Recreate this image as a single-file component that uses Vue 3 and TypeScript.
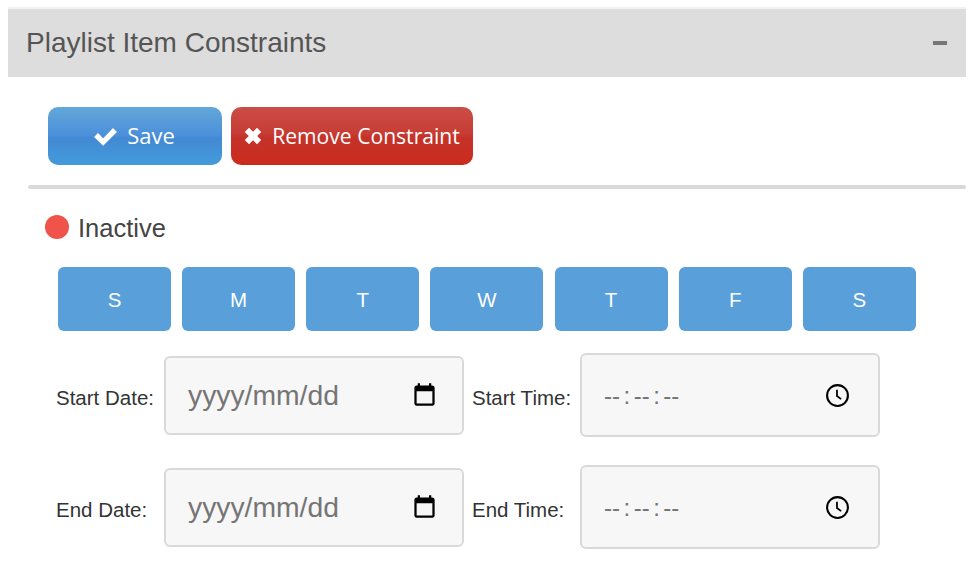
<template>
  <div class="page">
    <section class="panel">
      <header class="panel-head">
        <h2>Playlist Item Constraints</h2>
        <span class="collapse"></span>
      </header>

      <div class="panel-body">
        <div class="actions">
          <button class="btn btn-save">
            <svg class="btn-icon" viewBox="0 0 24 24" width="25" height="25">
              <path d="M1 12.500 4.800 8.700l5 5L19.200 3.800 23 7.600 9.800 20.800z" fill="#fff" />
            </svg>
            <span>Save</span>
          </button>
          <button class="btn btn-remove">
            <svg class="btn-icon" viewBox="0 0 18 18" width="18" height="18">
              <path d="M5 .8 9 4.800l4-4L17.200 5l-4 4 4 4-4.200 4.200-4-4-4 4L.8 13l4-4-4-4z" fill="#fff" />
            </svg>
            <span>Remove Constraint</span>
          </button>
        </div>

        <hr class="divider" />

        <div class="status">
          <span class="dot"></span>
          <span class="status-text">Inactive</span>
        </div>

        <div class="days">
          <button v-for="(d, i) in days" :key="i" class="day">{{ d }}</button>
        </div>

        <div v-for="row in rows" :key="row.date" class="field-row">
          <label class="lbl lbl-date">{{ row.date }}:</label>
          <div class="input input-date">
            <span class="placeholder">yyyy/mm/dd</span>
            <svg viewBox="0 0 24 24" width="27" height="27">
              <path d="M19 4h-1V2h-2v2H8V2H6v2H5C3.900 4 3 4.900 3 6v14c0 1.100.9 2 2 2h14c1.100 0 2-.9 2-2V6c0-1.100-.9-2-2-2zm0 16H5V9h14v11z" fill="#000" />
            </svg>
          </div>
          <label class="lbl lbl-time">{{ row.time }}:</label>
          <div class="input input-time">
            <span class="placeholder">--<i>:</i>--<i>:</i>--</span>
            <svg viewBox="0 0 24 24" width="25" height="25" fill="none" stroke="#000">
              <circle cx="12" cy="12" r="10" stroke-width="2" />
              <path d="M11.500 6.500V12.500l4 3" stroke-width="1.700" />
            </svg>
          </div>
        </div>
      </div>
    </section>
  </div>
</template>

<script setup lang="ts">
const days = ['S', 'M', 'T', 'W', 'T', 'F', 'S']
const rows = [
  { date: 'Start Date', time: 'Start Time' },
  { date: 'End Date', time: 'End Time' },
]
</script>

<style>
html,
body {
  margin: 0;
  background: #fff;
}
</style>

<style scoped>
.page {
  padding: 7px 8px 0;
  font-family: "Liberation Sans", Arial, sans-serif;
  color: #333;
}

.panel-head {
  display: flex;
  align-items: center;
  justify-content: space-between;
  height: 68px;
  padding: 0 19px 0 18px;
  background: #ddd;
  border-top: 2px solid #f1f1f1;
}

.panel-head h2 {
  margin: 0;
  font-size: 28px;
  font-weight: 400;
  color: #555;
}

.collapse {
  width: 14px;
  height: 4px;
  background: #777;
}

.panel-body {
  padding: 30px 0 0 20px;
}

.actions {
  display: flex;
  gap: 9px;
  padding-left: 20px;
}

.btn {
  display: flex;
  align-items: center;
  justify-content: center;
  height: 58px;
  padding: 0 0 2px;
  border: 0;
  border-radius: 10px;
  color: #fff;
  font-family: "Open Sans", sans-serif;
  font-size: 21.100px;
}

.btn-icon {
  margin-top: 2px;
}

.btn-save {
  width: 174px;
  gap: 9px;
  padding-right: 2px;
  background: linear-gradient(#62a8d8 0%, #4b8fda 50%, #4389d3 53%, #429bdb 100%);
  font-size: 22px;
}

.btn-remove {
  width: 242px;
  gap: 10px;
  background: linear-gradient(#cb4d47 0%, #c73d35 45%, #c4322a 53%, #cc2b1c 100%);
}

.divider {
  height: 4px;
  margin: 20px 0 0;
  border: 0;
  border-radius: 2px;
  background: #d9d9d9;
}

.status {
  display: flex;
  align-items: center;
  gap: 9.500px;
  height: 24px;
  margin: 26px 0 0 16.500px;
  font-size: 25.500px;
  line-height: 24px;
  color: #444;
}

.status-text {
  padding-top: 2px;
}

.dot {
  width: 24px;
  height: 24px;
  border-radius: 50%;
  background: #ef534a;
}

.days {
  display: flex;
  gap: 11.170px;
  margin: 28px 0 0 30px;
}

.day {
  width: 113px;
  height: 64px;
  padding: 2px 0 0;
  border: 0;
  border-radius: 6px;
  background: #599fd9;
  color: #fff;
  font-family: "Liberation Sans", Arial, sans-serif;
  font-size: 20.500px;
}

.field-row {
  display: flex;
  align-items: center;
  height: 84px;
  margin: 22px 0 0 28px;
  font-size: 20.500px;
}

.field-row + .field-row {
  margin-top: 28px;
}

.lbl {
  padding-top: 6px;
  color: #333;
}

.lbl-date {
  width: 108px;
}

.lbl-time {
  width: 108px;
  margin-left: 8px;
}

.input {
  display: flex;
  align-items: center;
  justify-content: space-between;
  box-sizing: border-box;
  width: 300px;
  background: #f7f7f7;
  border: 2px solid #d9d9d9;
  border-radius: 6px;
  color: #757575;
}

.input-date {
  height: 79px;
  padding: 0 24px 0 22px;
  font-size: 28.300px;
}

.input-date svg {
  margin-top: -1px;
}

.input-time {
  height: 84px;
  padding: 0 28px 0 22px;
  font-size: 24px;
}

.input-time .placeholder {
  padding-top: 2px;
}

.placeholder i {
  margin: 0 3.500px;
  font-style: normal;
}
</style>
